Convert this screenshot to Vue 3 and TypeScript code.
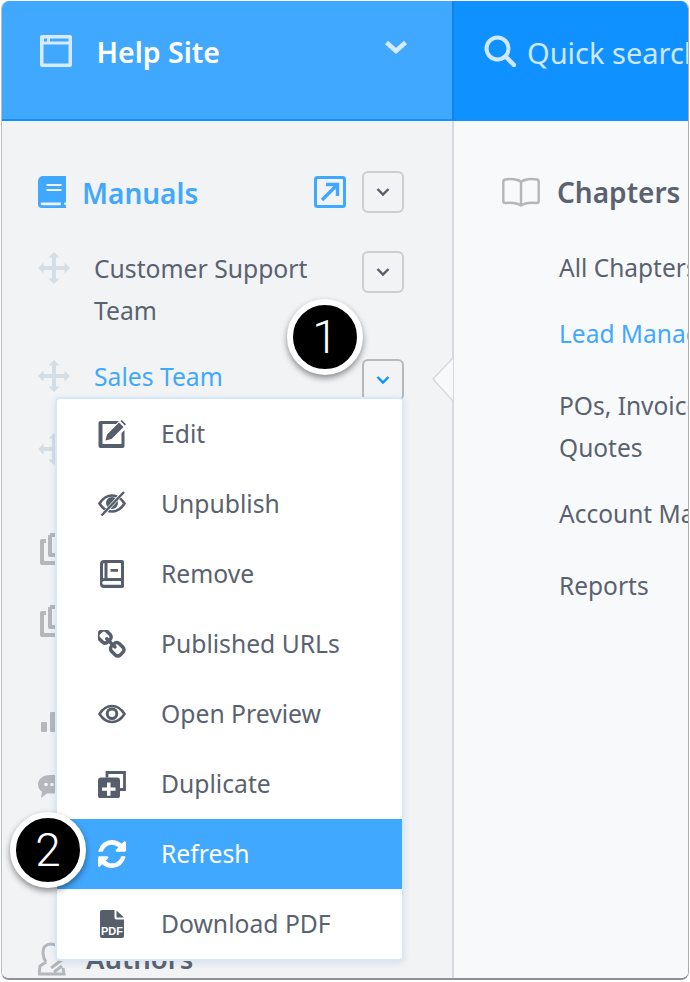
<script setup lang="ts">
interface Chapter { label: string; active?: boolean; cls: string }
const chapters: Chapter[] = [
  { label: 'All Chapters', cls: 'c1' },
  { label: 'Lead Management', active: true, cls: 'c2' },
  { label: 'POs, Invoices &\u00a0 Quotes', cls: 'c3' },
  { label: 'Account Management', cls: 'c4' },
  { label: 'Reports', cls: 'c5' },
]
const menu = ['edit', 'unpublish', 'remove', 'urls', 'preview', 'duplicate', 'refresh', 'pdf']
const labels: Record<string, string> = {
  edit: 'Edit', unpublish: 'Unpublish', remove: 'Remove', urls: 'Published URLs',
  preview: 'Open Preview', duplicate: 'Duplicate', refresh: 'Refresh', pdf: 'Download PDF',
}
</script>

<template>
  <div class="frame">
    <aside class="side">
      <header class="side-head">
        <svg class="i-site" viewBox="0 0 32 32"><path fill="#d6ebff" fill-rule="evenodd" d="M2 0h28a2 2 0 0 1 2 2v28a2 2 0 0 1-2 2H2a2 2 0 0 1-2-2V2a2 2 0 0 1 2-2zm1.500 9.500V28.500h25V9.500zM4 3.500v3h3v-3zm6 0v3h18.500v-3z"/></svg>
        <span class="site-name">Help Site</span>
        <svg class="i-chev" viewBox="0 0 24 14"><path d="M2.500 2.500 12 11 21.500 2.500" fill="none" stroke="#d6ebff" stroke-width="4.500"/></svg>
      </header>
      <div class="nav">
        <div class="row manuals">
          <svg class="i-book" viewBox="0 0 28 32"><path fill="#41a8ff" fill-rule="evenodd" d="M5 0h23v26.500h-1.500c-.5 1-.5 1.500 0 2.500H28v3H4a4 4 0 0 1-4-4V5a5 5 0 0 1 5-5zm3.500 8v2h15V8zm0 5v2h15v-2zM4 26.500a1.300 1.300 0 0 0 0 2.700h19c-.3-1-.3-1.700 0-2.700z"/></svg>
          <span class="manuals-t">Manuals</span>
          <svg class="i-ext" viewBox="0 0 32 32"><rect x="1.500" y="1.500" width="29" height="29" rx="2" fill="none" stroke="#41a8ff" stroke-width="3"/><path d="M8 24 22 10M12 8.500h11.500V20" fill="none" stroke="#41a8ff" stroke-width="3.400"/></svg>
          <button class="chev-btn"><svg viewBox="0 0 14 10"><path d="M1.500 2 7 7.500 12.500 2" fill="none" stroke="#565d6b" stroke-width="2.400"/></svg></button>
        </div>
        <div class="row team support">
          <svg class="i-move" viewBox="0 0 32 32"><path fill="#d5dde5" d="M16 0l5.500 5.500H18V14h8.500v-3.500L32 16l-5.500 5.500V18H18v8.500h3.500L16 32l-5.500-5.500H14V18H5.500v3.500L0 16l5.500-5.500V14H14V5.500h-3.500z"/></svg>
          <span class="team-t">Customer Support Team</span>
          <button class="chev-btn"><svg viewBox="0 0 14 10"><path d="M1.500 2 7 7.500 12.500 2" fill="none" stroke="#565d6b" stroke-width="2.400"/></svg></button>
        </div>
        <div class="row team sales">
          <svg class="i-move" viewBox="0 0 32 32"><path fill="#d5dde5" d="M16 0l5.500 5.500H18V14h8.500v-3.500L32 16l-5.500 5.500V18H18v8.500h3.500L16 32l-5.500-5.500H14V18H5.500v3.500L0 16l5.500-5.500V14H14V5.500h-3.500z"/></svg>
          <span class="team-t blue">Sales Team</span>
          <button class="chev-btn open"><svg viewBox="0 0 14 10"><path d="M1.500 2 7 7.500 12.500 2" fill="none" stroke="#0f92ff" stroke-width="2.400"/></svg></button>
        </div>
        <div class="row hidden-move">
          <svg class="i-move" viewBox="0 0 32 32"><path fill="#d5dde5" d="M16 0l5.500 5.500H18V14h8.500v-3.500L32 16l-5.500 5.500V18H18v8.500h3.500L16 32l-5.500-5.500H14V18H5.500v3.500L0 16l5.500-5.500V14H14V5.500h-3.500z"/></svg>
        </div>
        <div class="row stub s-copy1"><svg class="i-copy" viewBox="0 0 24 32"><path fill="none" stroke="#b4b7bc" stroke-width="4" stroke-linejoin="round" d="M6 8H2v22h20M10 2h12M10 2v20h12"/></svg></div>
        <div class="row stub s-copy2"><svg class="i-copy" viewBox="0 0 24 32"><path fill="none" stroke="#b4b7bc" stroke-width="4" stroke-linejoin="round" d="M6 8H2v22h20M10 2h12M10 2v20h12"/></svg></div>
        <div class="row stub s-bars"><svg class="i-bars" viewBox="0 0 16 20"><rect x="0" y="10" width="6" height="10" rx="1" fill="#b4b7bc"/><rect x="9" y="0" width="7" height="20" rx="1" fill="#b4b7bc"/></svg></div>
        <div class="row stub s-chat"><svg class="i-chat" viewBox="0 0 22 26"><path fill="#b4b7bc" d="M12 0C5 0 0 4 0 9.500c0 3 1.600 5.600 4 7.300L3 23l6-4.500h13V0z"/><circle cx="8" cy="9.500" r="1.800" fill="#f1f3f5"/><circle cx="14" cy="9.500" r="1.800" fill="#f1f3f5"/></svg></div>
        <div class="row authors">
          <svg class="i-auth" viewBox="0 0 28 34"><path fill="none" stroke="#b4b7bc" stroke-width="3" d="M8 20c-2-3-3-6-3-10 0-5 3-8 8-8s8 3 8 8c0 2-.5 4-1 5M8 20l-6 4-1 8h25l-1-6M13 26l12-9M24 24l-8 6"/></svg>
          <span class="authors-t">Authors</span>
        </div>
      </div>
    </aside>

    <main class="main">
      <header class="main-head">
        <svg class="i-search" viewBox="0 0 32 32"><circle cx="13.500" cy="13.500" r="11" fill="none" stroke="#cfe7ff" stroke-width="4"/><path d="M21.500 21.500 30 30" stroke="#cfe7ff" stroke-width="4.500" stroke-linecap="round"/></svg>
        <span class="search-t">Quick search</span>
      </header>
      <section class="chapters">
        <div class="ch-head">
          <svg class="i-open" viewBox="0 0 38 30"><path fill="none" stroke="#b3b6bb" stroke-width="2.400" d="M19 5C16 2 8 1.500 3 2.500 1.800 2.800 1.300 3.500 1.300 5v19c0 1.500.8 2 2.200 2 5-.6 11-.6 15.500 2.500 4.500-3.100 10.500-3.100 15.500-2.500 1.400 0 2.200-.5 2.200-2V5c0-1.500-.5-2.200-1.700-2.500C30 1.500 22 2 19 5zm0 0v23"/></svg>
          <span class="ch-title">Chapters</span>
        </div>
        <a v-for="c in chapters" :key="c.label" class="ch-item" :class="[c.cls, { blue: c.active }]">{{ c.label }}</a>
      </section>
    </main>

    <svg class="notch" viewBox="0 0 21 44"><path d="M21 0 1 21l20 22" fill="#f8f9fb" stroke="#d3dae1" stroke-width="1.500"/></svg>

    <ul class="menu">
      <li v-for="m in menu" :key="m" class="mi" :class="{ on: m === 'refresh' }">
        <svg v-if="m === 'urls'" class="mi-ic" viewBox="128 128 1536 1536"><path fill="#565d6b" d="M1456 1216q0-40-28-68l-208-208q-28-28-68-28-42 0-72 32 3 3 19 18.500t21.500 21.500 15 19 13 25.500 3.500 27.500q0 40-28 68t-68 28q-15 0-27.500-3.500t-25.500-13-19-15-21.500-21.500-18.500-19q-33 31-33 73 0 40 28 68l206 207q27 27 68 27 40 0 68-26l147-146q28-28 28-67zm-703-705q0-40-28-68l-206-207q-28-28-68-28-39 0-68 27l-147 146q-28 28-28 67 0 40 28 68l208 208q27 27 68 27 42 0 72-31-3-3-19-18.500t-21.500-21.500-15-19-13-25.500-3.500-27.500q0-40 28-68t68-28q15 0 27.500 3.500t25.500 13 19 15 21.500 21.500 18.500 19q33-31 33-73zm895 705q0 120-85 203l-147 146q-83 83-203 83-121 0-204-85l-206-207q-83-83-83-203 0-123 88-209l-88-88q-86 88-208 88-120 0-204-84l-208-208q-84-84-84-204t85-203l147-146q83-83 203-83 121 0 204 85l206 207q83 83 83 203 0 123-88 209l88 88q86-88 208-88 120 0 204 84l208 208q84 84 84 204z"/></svg>
        <svg v-else-if="m === 'refresh'" class="mi-ic" viewBox="128 128 1536 1536"><path fill="#fff" d="M1639 1056q0 5-1 7-64 268-268 434.500t-478 166.500q-146 0-282.500-55t-243.500-157l-129 129q-19 19-45 19t-45-19-19-45v-448q0-26 19-45t45-19h448q26 0 45 19t19 45-19 45l-137 137q71 66 161 102t187 36q134 0 250-65t186-179q11-17 53-117 8-23 30-23h192q13 0 22.500 9.500t9.500 22.500zm25-800v448q0 26-19 45t-45 19h-448q-26 0-45-19t-19-45 19-45l138-138q-148-137-349-137-134 0-250 65t-186 179q-11 17-53 117-8 23-30 23h-199q-13 0-22.500-9.500t-9.500-22.500v-7q65-268 270-434.500t480-166.500q146 0 284 55.500t245 156.500l130-129q19-19 45-19t45 19 19 45z"/></svg>
        <svg v-else class="mi-ic" viewBox="0 0 28 28">
          <template v-if="m === 'edit'">
            <path fill="#565d6b" d="M2.500 1H21l-3 3H4.500v20h19v-11l3-3v16a2 2 0 0 1-2 2h-22a2 2 0 0 1-2-2V3a2 2 0 0 1 2-2z"/>
            <path fill="#565d6b" d="M7.500 20.500 9 14.500 21 2.500l4.500 4.500-12 12zM22.500 1l1.200-1 4.300 4.300-1.200 1.200z"/>
          </template>
          <template v-else-if="m === 'unpublish'">
            <path fill="none" stroke="#565d6b" stroke-width="2.600" d="M1.500 13.500C5 8 9 5.500 14 5.500s9 2.500 12.500 8c-3.500 5.500-7.500 8-12.500 8s-9-2.500-12.500-8z"/>
            <circle cx="14" cy="13" r="6" fill="#565d6b"/>
            <path d="M3.500 26 26 1.500" stroke="#fff" stroke-width="3.600"/>
            <path d="M3.500 25.500 26 2" stroke="#565d6b" stroke-width="2.400"/>
          </template>
          <template v-else-if="m === 'remove'">
            <path fill="#565d6b" fill-rule="evenodd" d="M6 0h18a2 2 0 0 1 2 2v24a2 2 0 0 1-2 2H6a4 4 0 0 1-4-4V4a4 4 0 0 1 4-4zm3.500 3v15H23V3zM6 3a1.300 1.300 0 0 0-1 1.300v14.200c.6-.4 1.200-.5 1.500-.5V3zM6 21a1.700 1.700 0 0 0 0 3.700h17V21zM12.500 9H20v2.800h-7.500z"/>
          </template>
          <template v-else-if="m === 'preview'">
            <path fill="none" stroke="#565d6b" stroke-width="2.600" d="M1.500 14C5 8.500 9 6 14 6s9 2.500 12.500 8c-3.500 5.500-7.500 8-12.500 8s-9-2.500-12.500-8z"/>
            <circle cx="14" cy="13.800" r="4.800" fill="none" stroke="#565d6b" stroke-width="3"/>
          </template>
          <template v-else-if="m === 'duplicate'">
            <path fill="none" stroke="#565d6b" stroke-width="2.800" d="M9 7.500V2.500h17.500v17H21"/>
            <path fill="#565d6b" fill-rule="evenodd" d="M3 7.500h16a3 3 0 0 1 3 3v15a3 3 0 0 1-3 3H3a3 3 0 0 1-3-3v-15a3 3 0 0 1 3-3zm6 5v5H4v3.200h5v5h3.500v-5h5v-3.200h-5v-5z"/>
          </template>
          <template v-else>
            <path fill="#565d6b" d="M4 0h12.500v7.500a2 2 0 0 0 2 2H26V26a2 2 0 0 1-2 2H4a2 2 0 0 1-2-2V2a2 2 0 0 1 2-2zM18.500 0.500 26 7.500h-7.500z"/>
            <text x="14" y="25" text-anchor="middle" class="pdf-t">PDF</text>
          </template>
        </svg>
        <span>{{ labels[m] }}</span>
      </li>
    </ul>

    <span class="badge b1">1</span>
    <span class="badge b2">2</span>
  </div>
</template>

<style>
html, body { margin: 0; background: #fff; }
</style>

<style scoped>
.frame {
  position: relative;
  box-sizing: border-box;
  width: 688px;
  height: 979px;
  margin: 1px 0 0 1px;
  display: grid;
  grid-template-columns: 452px 1fr;
  overflow: hidden;
  border-radius: 8px;
  border-left: 1px solid #b9bcc0;
  border-right: 1px solid #a9acb0;
  border-bottom: 2px solid #8d9094;
  font-family: "Noto Sans", "Open Sans", sans-serif;
  color: #5a6270;
}
svg { display: block; flex: none; }
.side { background: #f1f3f5; min-width: 0; border-right: 2px solid #d3dae1; box-sizing: border-box; width: 452px; }
.side-head {
  box-sizing: border-box;
  height: 120px;
  width: 452px;
  background: #41a8ff;
  border-bottom: 2px solid #0f92ff;
  border-right: 2px solid #0c86ec;
  display: flex;
  align-items: flex-start;
  padding: 34px 0 0 38px;
  color: #fff;
}
.i-site { width: 32px; height: 32px; }
.site-name { margin: -1px 0 0 24.500px; font-size: 28.500px; font-weight: 600; line-height: 36px; }
.i-chev { width: 24px; height: 14px; margin-left: auto; margin-right: 44px; margin-top: 5px; }
.nav { padding: 50px 48px 0 36px; }
.row { display: flex; align-items: flex-start; }
.manuals { height: 42px; align-items: center; }
.i-book { width: 28px; height: 32px; }
.manuals-t { margin: 2px 0 0 16px; font-size: 28px; font-weight: 600; color: #41a8ff; }
.i-ext { width: 32px; height: 32px; margin-left: auto; margin-right: 16px; }
.chev-btn {
  box-sizing: border-box;
  width: 42px; height: 42px;
  padding: 0;
  border: 2px solid #cbced2;
  border-radius: 6px;
  background: transparent;
  display: flex; align-items: center; justify-content: center;
  flex: none;
}
.chev-btn svg { width: 14px; height: 10px; }
.chev-btn.open { border-color: #b5b8bc; }
.team { margin-top: 38px; }
.support { height: 84px; }
.sales { margin-top: 24px; height: 42px; }
.i-move { width: 32px; height: 32px; margin-top: 1px; }
.team-t { width: 236px; margin: -3px auto 0 24px; font-size: 24.700px; line-height: 42px; }
.blue { color: #41a8ff !important; }
.hidden-move { margin-top: 31px; height: 32px; }
.stub { position: relative; }
.s-copy1 { margin-top: 69px; height: 32px; }
.s-copy2 { margin-top: 40px; height: 32px; }
.s-bars { margin-top: 75px; height: 20px; padding-left: 3px; }
.s-chat { margin-top: 43px; height: 26px; }
.i-copy { width: 24px; height: 32px; margin-left: 2px; }
.i-bars { width: 16px; height: 20px; }
.i-chat { width: 22px; height: 26px; }
.authors { margin-top: 139px; align-items: center; }
.i-auth { width: 28px; height: 34px; }
.authors-t { margin-left: 20px; font-size: 27.500px; font-weight: 600; }

.main { background: #f8f9fb; min-width: 0; overflow: hidden; }
.main-head {
  box-sizing: border-box;
  height: 120px;
  background: #0f92ff;
  display: flex;
  align-items: flex-start;
  padding: 34px 0 0 30px;
  white-space: nowrap;
}
.i-search { width: 32px; height: 32px; }
.search-t { margin-left: 11px; font-size: 29px; line-height: 36px; color: #cfe7ff; }
.chapters { padding: 56px 0 0 48px; }
.ch-head { display: flex; align-items: center; height: 30px; }
.i-open { width: 38px; height: 30px; }
.ch-title { margin-left: 17px; font-size: 28px; font-weight: 600; white-space: nowrap; }
.ch-item { display: block; margin-left: 57px; font-size: 24.500px; line-height: 42px; width: 180px; white-space: nowrap; }
.c1 { margin-top: 40px; }
.c2 { margin-top: 24px; }
.c3 { margin-top: 30px; white-space: normal; width: 190px; }
.c4 { margin-top: 24px; }
.c5 { margin-top: 30px; }

.notch { position: absolute; left: 430px; top: 357px; width: 21px; height: 44px; }
.menu {
  position: absolute;
  left: 53px;
  top: 396px;
  box-sizing: border-box;
  width: 349px;
  margin: 0;
  padding: 0;
  list-style: none;
  background: #fff;
  border: 2px solid #d5e9f9;
  border-radius: 5px;
  box-shadow: 0 2px 6px rgba(80, 110, 140, .15);
}
.mi { display: flex; align-items: center; height: 70px; padding-left: 41px; font-size: 24.700px; color: #5a6270; }
.mi span { margin: -2px 0 0 35px; }
.mi.on { background: #41a8ff; color: #fff; }
.mi-ic { width: 28px; height: 28px; margin-top: -1px; }
.pdf-t { font: 700 11px "Liberation Sans", sans-serif; fill: #fff; }
.badge {
  position: absolute;
  box-sizing: border-box;
  width: 76px; height: 76px;
  border-radius: 50%;
  background: #000;
  border: 6px solid #fff;
  box-shadow: 0 3px 6px rgba(0, 0, 0, .45);
  color: #fff;
  font: 300 46px/64px Roboto, "Liberation Sans", sans-serif;
  text-align: center;
}
.b1 { left: 285px; top: 298px; }
.b2 { left: 8px; top: 811px; }
</style>
